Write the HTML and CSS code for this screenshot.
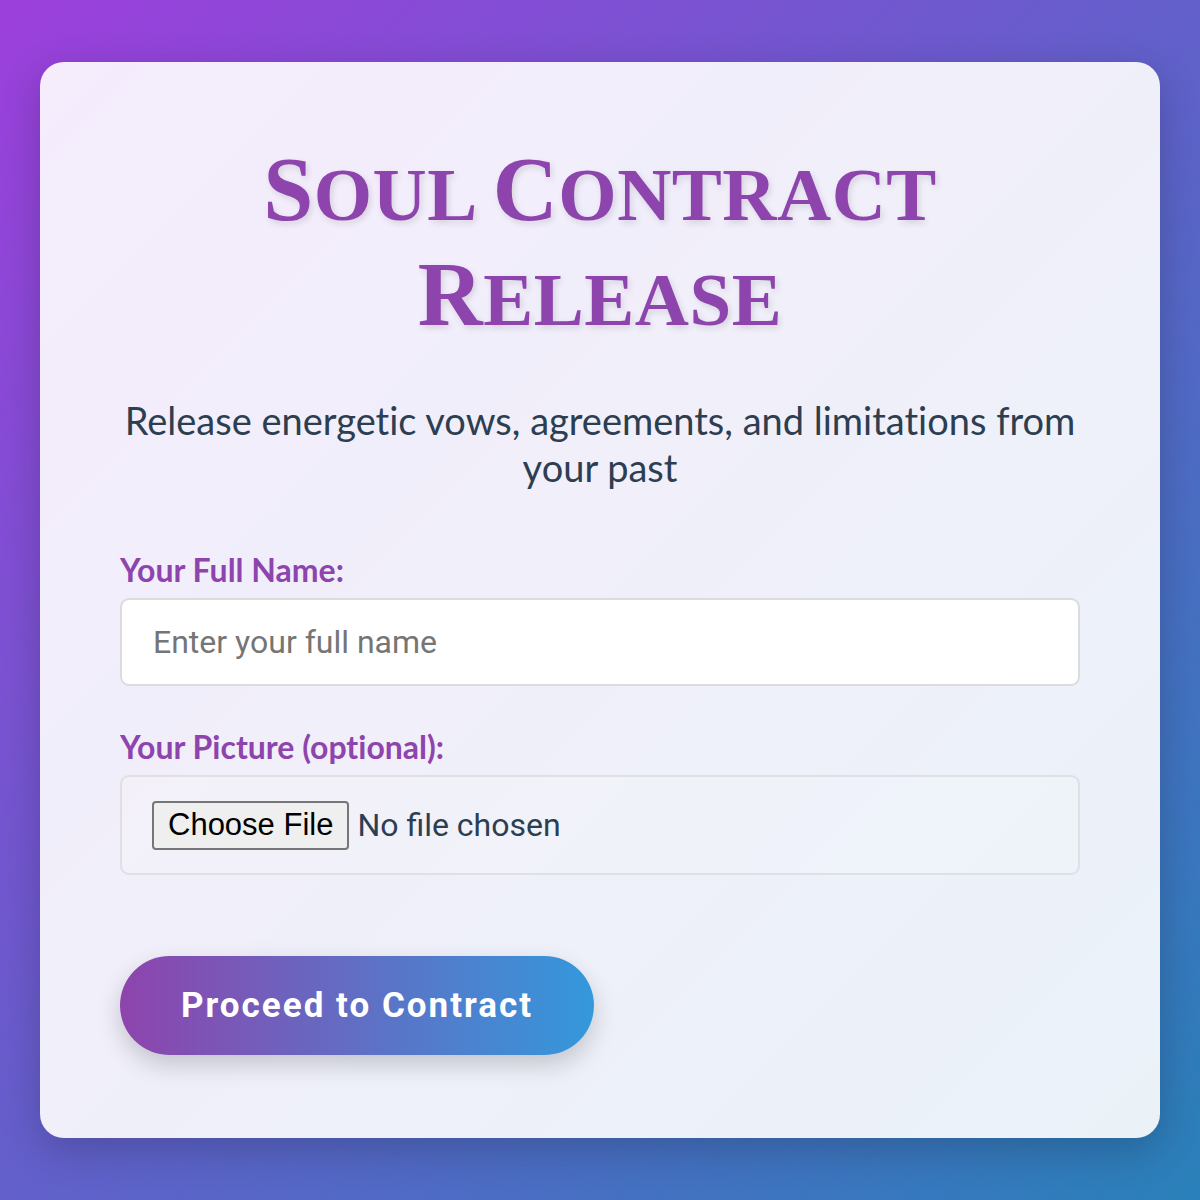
FILE: index.html
```html
<!DOCTYPE html>
<html lang="en">
<head>
<meta charset="utf-8">
<title>Soul Contract Release</title>
<link rel="stylesheet" href="styles.css">
</head>
<body>
  <main class="card">
    <h1 class="title"><span class="cap">S</span>oul <span class="cap">C</span>ontract <span class="cap">R</span>elease</h1>
    <p class="subtitle">Release energetic vows, agreements, and limitations from your past</p>
    <form class="form">
      <div class="group">
        <label class="label" for="name">Your Full Name:</label>
        <input class="text-input" id="name" type="text" placeholder="Enter your full name">
      </div>
      <div class="group">
        <label class="label" for="pic">Your Picture (optional):</label>
        <div class="file-box">
          <input class="file-input" id="pic" type="file" accept="image/*">
        </div>
      </div>
      <button class="proceed" type="button">Proceed to Contract</button>
    </form>
  </main>
</body>
</html>
```
FILE: styles.css
```css
* { box-sizing: border-box; }
html, body { margin: 0; padding: 0; }
body {
  min-height: 100vh;
  display: flex;
  align-items: center;
  justify-content: center;
  background: linear-gradient(135deg, #9c3fdc 0%, #2980b9 100%);
  font-family: "Lato", "Noto Sans", sans-serif;
  font-variant-ligatures: none;
  font-feature-settings: "liga" 0, "clig" 0, "dlig" 0;
  color: #2c3e50;
}
.card {
  width: 1120px;
  background: rgba(255, 255, 255, 0.9);
  border-radius: 24px;
  padding: 80px 80px 83px;
  box-shadow: 0 12px 40px rgba(0, 0, 0, 0.2);
}
.title {
  margin: 0 auto;
  max-width: 760px;
  text-align: center;
  font-family: "Liberation Serif", "DejaVu Serif", serif;
  text-transform: uppercase;
  font-weight: 700;
  font-size: 75px;
  line-height: 105px;
  letter-spacing: 0.5px;
  color: #8e44ad;
  text-shadow: 2px 3px 6px rgba(0, 0, 0, 0.12);
}
.cap { font-size: 90px; line-height: 0; }
.subtitle {
  margin: 45px 0 60px;
  text-align: center;
  font-size: 38px;
  line-height: 47px;
  color: #2c3e50;
}
.form { display: flex; flex-direction: column; }
.group { margin-bottom: 42px; }
.label {
  display: block;
  margin-bottom: 9px;
  font-weight: 700;
  font-size: 32px;
  line-height: 38px;
  color: #8e44ad;
}
.text-input {
  display: block;
  width: 100%;
  height: 88px;
  padding: 0 31px;
  border: 2px solid #dcdcdc;
  border-radius: 9px;
  background: #fff;
  font-family: "Roboto", sans-serif;
  font-size: 32px;
  color: #2c3e50;
  outline: none;
}
.text-input::placeholder { color: #757575; }
.file-box {
  height: 100px;
  display: flex;
  align-items: center;
  padding: 0 30px;
  border: 2px solid #dfe0e4;
  border-radius: 9px;
  background: rgba(255, 255, 255, 0.15);
}
.file-input {
  font-family: "Roboto", sans-serif;
  font-size: 32px;
  color: #2c3e50;
}
.file-input::file-selector-button {
  font-family: "Liberation Sans", Arial, sans-serif;
  font-size: 31px;
  color: #000;
  background: #efefef;
  border: 2px solid #767676;
  border-radius: 4px;
  height: 49px;
  padding: 0 14px;
  margin-right: 8px;
}
.proceed {
  align-self: flex-start;
  margin-top: 39px;
  height: 99px;
  padding: 0 61px;
  border: none;
  border-radius: 50px;
  background: linear-gradient(90deg, #8e44ad 0%, #3498db 100%);
  color: #fff;
  font-family: "Roboto", sans-serif;
  font-weight: 700;
  font-size: 35px;
  letter-spacing: 2px;
  box-shadow: 0 10px 25px rgba(0, 0, 0, 0.18);
  cursor: pointer;
}
```
